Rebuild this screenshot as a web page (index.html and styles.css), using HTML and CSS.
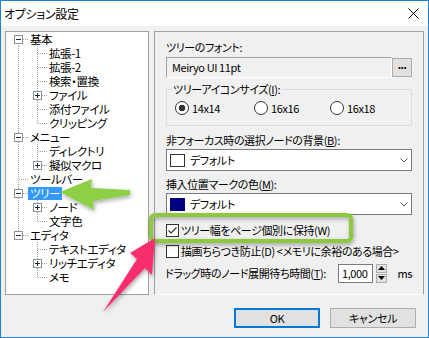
FILE: index.html
```html
<!DOCTYPE html>
<html lang="ja">
<head>
<meta charset="utf-8">
<title>オプション設定</title>
<link rel="stylesheet" href="styles.css">
</head>
<body>
<div class="window">
  <div class="titlebar">
    <span class="title">オプション設定</span>
    <svg class="close" width="11" height="11" viewBox="0 0 11 11"><path d="M0.5 0.5L10.5 10.5M10.5 0.5L0.5 10.5" stroke="#000" stroke-width="1" fill="none"/></svg>
  </div>
  <div class="body">
    <div class="main">
      <div class="tree">
        <div class="row"><span class="c f"><span class="exp minus"></span></span><span class="lbl">基本</span></div>
        <div class="row"><span class="g v"></span><span class="c t"></span><span class="lbl">拡張-1</span></div>
        <div class="row"><span class="g v"></span><span class="c t"></span><span class="lbl">拡張-2</span></div>
        <div class="row"><span class="g v"></span><span class="c t"></span><span class="lbl">検索・置換</span></div>
        <div class="row"><span class="g v"></span><span class="c t"><span class="exp plus"></span></span><span class="lbl">ファイル</span></div>
        <div class="row"><span class="g v"></span><span class="c t"></span><span class="lbl">添付ファイル</span></div>
        <div class="row"><span class="g v"></span><span class="c l"></span><span class="lbl">クリッピング</span></div>
        <div class="row"><span class="c t"><span class="exp minus"></span></span><span class="lbl">メニュー</span></div>
        <div class="row"><span class="g v"></span><span class="c t"></span><span class="lbl">ディレクトリ</span></div>
        <div class="row"><span class="g v"></span><span class="c l"><span class="exp plus"></span></span><span class="lbl">擬似マクロ</span></div>
        <div class="row"><span class="c t"></span><span class="lbl">ツールバー</span></div>
        <div class="row"><span class="c t"><span class="exp minus"></span></span><span class="lbl sel">ツリー</span></div>
        <div class="row"><span class="g v"></span><span class="c t"><span class="exp plus"></span></span><span class="lbl">ノード</span></div>
        <div class="row"><span class="g v"></span><span class="c l"></span><span class="lbl">文字色</span></div>
        <div class="row"><span class="c l"><span class="exp minus"></span></span><span class="lbl">エディタ</span></div>
        <div class="row"><span class="g"></span><span class="c t"></span><span class="lbl">テキストエディタ</span></div>
        <div class="row"><span class="g"></span><span class="c t"><span class="exp plus"></span></span><span class="lbl">リッチエディタ</span></div>
        <div class="row"><span class="g"></span><span class="c l"></span><span class="lbl">メモ</span></div>
      </div>
      <div class="panel">
        <div class="field-label">ツリーのフォント:</div>
        <div class="font-row">
          <div class="textbox">Meiryo UI 11pt</div>
          <div class="dots-btn">...</div>
        </div>
        <div class="group">
          <div class="legend">ツリーアイコンサイズ(<u>I</u>):</div>
          <div class="radios">
            <div class="radio r1"><span class="rb checked"></span><span>14x14</span></div>
            <div class="radio r2"><span class="rb"></span><span>16x16</span></div>
            <div class="radio"><span class="rb"></span><span>16x18</span></div>
          </div>
        </div>
        <div class="field-label gap6">非フォーカス時の選択ノードの背景(<u>B</u>):</div>
        <div class="combo">
          <span class="swatch white"></span>
          <span class="combo-text">デフォルト</span>
          <svg class="chev" width="8" height="5" viewBox="0 0 8 5"><path d="M0.5 0.5L4 4L7.5 0.5" stroke="#555" fill="none"/></svg>
        </div>
        <div class="field-label gap5">挿入位置マークの色(<u>M</u>):</div>
        <div class="combo">
          <span class="swatch navy"></span>
          <span class="combo-text">デフォルト</span>
          <svg class="chev" width="8" height="5" viewBox="0 0 8 5"><path d="M0.5 0.5L4 4L7.5 0.5" stroke="#555" fill="none"/></svg>
        </div>
        <div class="check first">
          <span class="cb"><svg width="11" height="11" viewBox="0 0 11 11"><path d="M1.5 5.5L4 8L9.5 2.5" stroke="#333" stroke-width="1.2" fill="none"/></svg></span>
          <span>ツリー幅をページ個別に保持(W)</span>
        </div>
        <div class="check second">
          <span class="cb"></span>
          <span>描画ちらつき防止(D) &lt;メモリに余裕のある場合&gt;</span>
        </div>
        <div class="drag">
          <span class="drag-label">ドラッグ時のノード展開待ち時間(<u>T</u>):</span>
          <span class="spin-input">1,000</span>
          <span class="spinner">
            <span class="sp up"><svg width="7" height="4" viewBox="0 0 7 4"><path d="M0 4L3.5 0L7 4Z" fill="#000"/></svg></span>
            <span class="sp down"><svg width="7" height="4" viewBox="0 0 7 4"><path d="M0 0L3.5 4L7 0Z" fill="#000"/></svg></span>
          </span>
          <span class="unit">ms</span>
        </div>
      </div>
    </div>
    <div class="footer">
      <button class="btn btn-default">OK</button>
      <button class="btn">キャンセル</button>
    </div>
  </div>
  <svg class="annot" width="429" height="338" viewBox="0 0 429 338">
    <defs>
      <filter id="sh" x="-30%" y="-30%" width="160%" height="160%">
        <feDropShadow dx="1" dy="2" stdDeviation="2" flood-color="#000" flood-opacity="0.35"/>
      </filter>
    </defs>
    <rect x="151" y="215" width="200" height="26" rx="4" ry="4" fill="none" stroke="#8cc83f" stroke-width="4" filter="url(#sh)"/>
    <polygon points="60,192 92,179 91,188 130,190 130,195 93,201 94,210" fill="#8dcf45" filter="url(#sh)"/>
    <polygon points="155,238 130,253 137,259 103,312 145,268 152,275" fill="#f62e6e" filter="url(#sh)"/>
  </svg>
</div>
</body>
</html>
```

FILE: styles.css
```css
body {
  margin: 0;
  background: #fff;
  color: #000;
  font-family: "Noto Sans CJK JP", "Noto Sans", sans-serif;
  font-size: 11px;
  letter-spacing: -0.4px;
  font-feature-settings: "palt";
}

.window {
  position: relative;
  width: 429px;
  height: 338px;
  box-sizing: border-box;
  border: 1px solid #1883d7;
  background: #f0f0f0;
  display: flex;
  flex-direction: column;
}

.titlebar {
  flex: none;
  height: 25px;
  background: #fff;
  display: flex;
  align-items: center;
  justify-content: space-between;
  padding: 0 9px 0 3px;
}

.title {
  line-height: 25px;
  font-size: 12px;
  letter-spacing: -0.3px;
}

.body {
  flex: 1;
  padding: 5px 4px 0;
}

.main {
  display: flex;
  gap: 5px;
  height: 264px;
}

/* ---------- tree ---------- */
.tree {
  width: 144px;
  flex: none;
  box-sizing: border-box;
  border: 1px solid #a0a0a0;
  background: #fff;
  overflow: hidden;
}

.row {
  display: flex;
  align-items: center;
  height: 14px;
}

.g {
  flex: none;
  width: 19px;
  height: 14px;
}

.g.v {
  background-image: repeating-linear-gradient(to bottom, #a0a0a0 0 1px, transparent 1px 2px);
  background-size: 1px 14px;
  background-position: 12px 0;
  background-repeat: no-repeat;
}

.c {
  flex: none;
  width: 22px;
  height: 14px;
  display: flex;
  align-items: center;
  background-image:
    repeating-linear-gradient(to bottom, #a0a0a0 0 1px, transparent 1px 2px),
    repeating-linear-gradient(to right, #a0a0a0 0 1px, transparent 1px 2px);
  background-repeat: no-repeat;
}

.c.t {
  background-size: 1px 14px, 9px 1px;
  background-position: 12px 0, 13px 7px;
}

.c.l {
  background-size: 1px 7px, 9px 1px;
  background-position: 12px 0, 13px 7px;
}

.c.f {
  background-size: 1px 7px, 9px 1px;
  background-position: 12px 7px, 13px 7px;
}

.exp {
  width: 9px;
  height: 9px;
  box-sizing: border-box;
  margin-left: 8px;
  border: 1px solid #919191;
}

.exp.minus {
  background: linear-gradient(#1c2e5a, #1c2e5a) center / 5px 1px no-repeat, #fff;
}

.exp.plus {
  background:
    linear-gradient(#1c2e5a, #1c2e5a) center / 5px 1px no-repeat,
    linear-gradient(#1c2e5a, #1c2e5a) center / 1px 5px no-repeat,
    #fff;
}

.lbl {
  height: 13px;
  line-height: 13px;
  padding: 0 2px;
  white-space: nowrap;
  font-size: 11.5px;
}

.lbl.sel {
  background: #3399ff;
  color: #fff;
}

/* ---------- panel ---------- */
.panel {
  width: 270px;
  flex: none;
  box-sizing: border-box;
  border: 1px solid #a0a0a0;
  border-bottom-color: #fff;
  padding: 7px 11px 0;
}

.field-label {
  height: 16px;
  line-height: 16px;
  white-space: nowrap;
}

.field-label.gap6 { margin-top: 6px; }
.field-label.gap5 { margin-top: 5px; }

.font-row {
  display: flex;
  margin-top: 2px;
  height: 21px;
}

.textbox {
  flex: 1;
  box-sizing: border-box;
  border: 1px solid #a0a0a0;
  border-right-color: #fff;
  border-bottom-color: #fff;
  background: #f0f0f0;
  padding-left: 5px;
  line-height: 19px;
}

.dots-btn {
  width: 20px;
  height: 19px;
  margin-top: 1px;
  box-sizing: border-box;
  border: 1px solid #adadad;
  background: #e1e1e1;
  font-family: "Liberation Sans", sans-serif;
  font-weight: bold;
  font-size: 12px;
  line-height: 12px;
  text-align: center;
  letter-spacing: -0.5px;
}

.group {
  margin-top: 11px;
  border: 1px solid #dcdcdc;
  padding: 0 8px 10px;
}

.legend {
  width: fit-content;
  height: 16px;
  line-height: 16px;
  margin: -9px 0 0 -4px;
  padding: 0 2px;
  background: #f0f0f0;
  white-space: nowrap;
}

.radios {
  display: flex;
  margin-top: 4px;
  height: 14px;
}

.radio {
  display: flex;
  align-items: center;
  gap: 3px;
  line-height: 14px;
}

.radio.r1 { width: 79px; }
.radio.r2 { width: 76px; }

.rb {
  width: 14px;
  height: 14px;
  box-sizing: border-box;
  border: 1px solid #333;
  border-radius: 50%;
  background: #fff;
}

.rb.checked {
  background: radial-gradient(circle, #333 0 3px, #fff 3.6px);
}

.combo {
  margin-top: 1px;
  height: 22px;
  box-sizing: border-box;
  border: 1px solid #7a7a7a;
  background: #fff;
  display: flex;
  align-items: center;
  padding: 0 3px;
}

.swatch {
  width: 15px;
  height: 13px;
  box-sizing: border-box;
  border: 1px solid #333;
}

.swatch.white { background: #fff; }
.swatch.navy { background: #000080; border-color: #000080; }

.combo-text {
  margin-left: 5px;
  line-height: 20px;
}

.chev {
  margin-left: auto;
  margin-right: 0;
}

.check {
  display: flex;
  align-items: center;
  gap: 2px;
  height: 16px;
  line-height: 16px;
  white-space: nowrap;
}

.check.first { margin-top: 7px; }
.check.second { margin-top: 5px; }

.cb {
  width: 13px;
  height: 13px;
  box-sizing: border-box;
  border: 1px solid #333;
  background: #fff;
  display: flex;
  align-items: center;
  justify-content: center;
  flex: none;
}

.drag {
  display: flex;
  align-items: center;
  height: 20px;
  margin-top: 4px;
  white-space: nowrap;
}

.drag-label {
  width: 173px;
  flex: none;
  margin-left: -1px;
}

.spin-input {
  width: 37px;
  height: 19px;
  box-sizing: border-box;
  border: 1px solid #7a7a7a;
  background: #fff;
  padding-left: 3px;
  line-height: 17px;
}

.spinner {
  margin-left: 3px;
  width: 12px;
  height: 19px;
  display: flex;
  flex-direction: column;
  gap: 1px;
}

.sp {
  flex: 1;
  box-sizing: border-box;
  border: 1px solid #adadad;
  background: #e1e1e1;
  display: flex;
  align-items: center;
  justify-content: center;
}

.unit {
  margin-left: 10px;
}

/* ---------- footer ---------- */
.footer {
  display: flex;
  justify-content: flex-end;
  gap: 10px;
  margin-top: 13px;
  padding-right: 8px;
}

.btn {
  width: 86px;
  height: 20px;
  box-sizing: border-box;
  border: 1px solid #adadad;
  background: #e1e1e1;
  font-family: "Noto Sans CJK JP", "Noto Sans", sans-serif;
  font-feature-settings: "palt";
  font-size: 11px;
  letter-spacing: -0.3px;
  line-height: 16px;
  padding: 0;
  color: #000;
}

.btn-default {
  border: 2px solid #0078d7;
}

/* ---------- annotations ---------- */
.annot {
  position: absolute;
  top: -1px;
  left: -1px;
  pointer-events: none;
}
```
